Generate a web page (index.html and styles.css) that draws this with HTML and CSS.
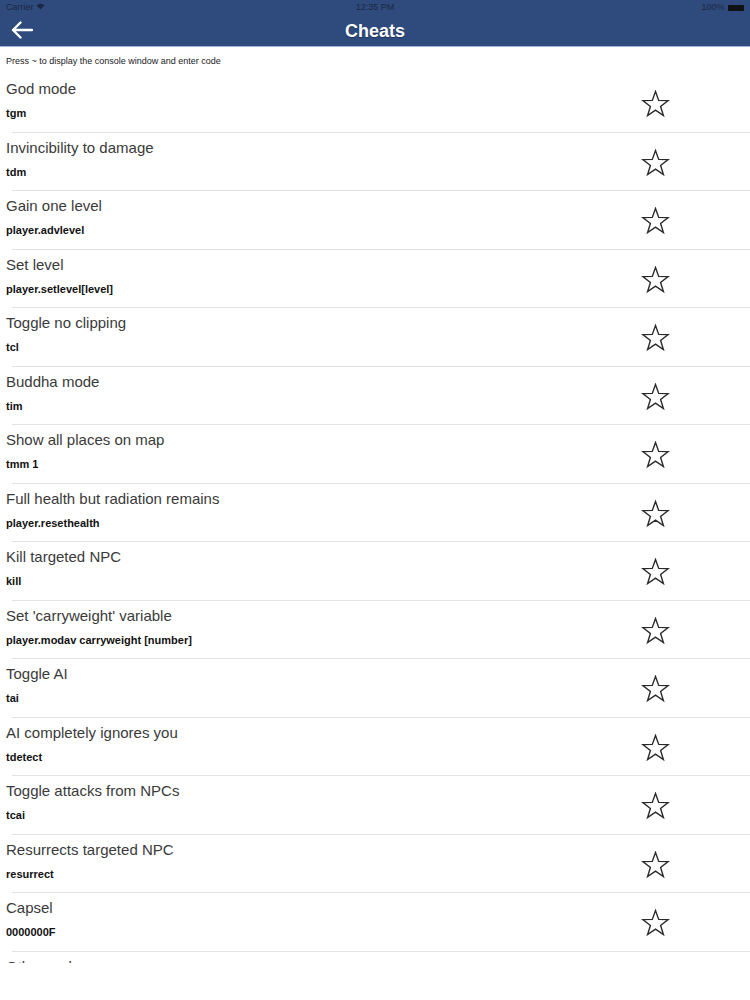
FILE: index.html
```html
<!DOCTYPE html>
<html lang="en">

<head>
    <meta charset="UTF-8">
    <meta name="viewport" content="width=device-width, initial-scale=1.0">
    <title>Cheats</title>
    <link rel="stylesheet" href="styles.css">
</head>

<body>

    <div class="topbar">
        <div class="status">
            <span class="carrier">Carrier
                <svg width="9" height="7" viewBox="0 0 9 7"><path d="M0.5 2.2 A6 6 0 0 1 8.5 2.2 L4.5 6.5 Z" fill="#1d2740"/></svg>
            </span>
            <span class="clock">12:35 PM</span>
            <span class="battery">100% <span class="cell"></span></span>
        </div>
        <div class="nav">
            <svg class="back" width="22" height="18" viewBox="0 0 22 18">
                <path d="M21 9 H2 M9.5 1.5 L2 9 L9.5 16.5" fill="none" stroke="#fff" stroke-width="2.4" stroke-linecap="round" stroke-linejoin="round"/>
            </svg>
            <h1 class="title">Cheats</h1>
        </div>
    </div>

    <p class="hint">Press ~ to display the console window and enter code</p>

    <ul class="cheats" id="cheats"></ul>

    <script>
        var cheats = [
            ["God mode", "tgm"],
            ["Invincibility to damage", "tdm"],
            ["Gain one level", "player.advlevel"],
            ["Set level", "player.setlevel[level]"],
            ["Toggle no clipping", "tcl"],
            ["Buddha mode", "tim"],
            ["Show all places on map", "tmm 1"],
            ["Full health but radiation remains", "player.resethealth"],
            ["Kill targeted NPC", "kill"],
            ["Set 'carryweight' variable", "player.modav carryweight [number]"],
            ["Toggle AI", "tai"],
            ["AI completely ignores you", "tdetect"],
            ["Toggle attacks from NPCs", "tcai"],
            ["Resurrects targeted NPC", "resurrect"],
            ["Capsel", "0000000F"],
            ["Other codes", "..."]
        ]

        var star = '<svg class="star" width="29" height="28" viewBox="0 0 29 28"><path d="M14.5 1.5 L17.7 10.4 L27.2 10.6 L19.6 16.4 L22.4 25.6 L14.5 20.1 L6.6 25.6 L9.4 16.4 L1.8 10.6 L11.3 10.4 Z" fill="none" stroke="#2a2a2a" stroke-width="1.4" stroke-linejoin="miter"/></svg>'

        var list = document.getElementById("cheats")

        cheats.forEach(function (c) {
            var li = document.createElement("li")
            li.className = "row"
            li.innerHTML = '<div class="text"><div class="name"></div><div class="code"></div></div>' + star
            li.querySelector(".name").textContent = c[0]
            li.querySelector(".code").textContent = c[1]
            list.appendChild(li)
        })
    </script>
</body>

</html>
```

FILE: styles.css
```css
body {
    margin: 0;
    background-color: white;
    font-family: "Liberation Sans", Arial, sans-serif;
}

.topbar {
    background-color: #2f4b7e;
    height: 46px;
    border-bottom: 1px solid #9db6da;
}

.status {
    height: 14px;
    display: flex;
    justify-content: space-between;
    align-items: center;
    padding: 0 6px;
    font-size: 9px;
    color: #1d2740;
}

.status span {
    flex: 1;
}

.clock {
    text-align: center;
}

.battery {
    text-align: right;
}

.cell {
    display: inline-block;
    width: 16px;
    height: 6px;
    background-color: #111;
    border-radius: 1px;
    vertical-align: -1px;
    margin-left: 1px;
}

.nav {
    height: 32px;
    display: flex;
    align-items: center;
    justify-content: center;
    position: relative;
}

.back {
    position: absolute;
    left: 11px;
    top: 7px;
}

.title {
    margin: 2px 0 0;
    color: white;
    font-size: 18px;
    font-weight: bold;
    text-shadow: 0 1px 1px rgba(0, 0, 0, 0.35);
}

.hint {
    margin: 0;
    padding: 9px 6px 0;
    height: 18px;
    font-size: 9px;
    color: #222;
}

.cheats {
    list-style: none;
    margin: 0;
    padding: 0;
    height: 889px;
    overflow: hidden;
}

.row {
    height: 57.5px;
    display: flex;
    align-items: center;
    border-bottom: 1px solid #e3e3e3;
    margin-left: 12px;
}

.text {
    flex: 1;
    margin-left: -6px;
    align-self: flex-start;
    padding-top: 6px;
}

.name {
    font-size: 15px;
    color: #3a3a3a;
    height: 20px;
}

.code {
    margin-top: 7px;
    font-size: 11px;
    font-weight: bold;
    color: #111;
}

.star {
    margin-top: 3px;
    margin-right: 80px;
}
```
